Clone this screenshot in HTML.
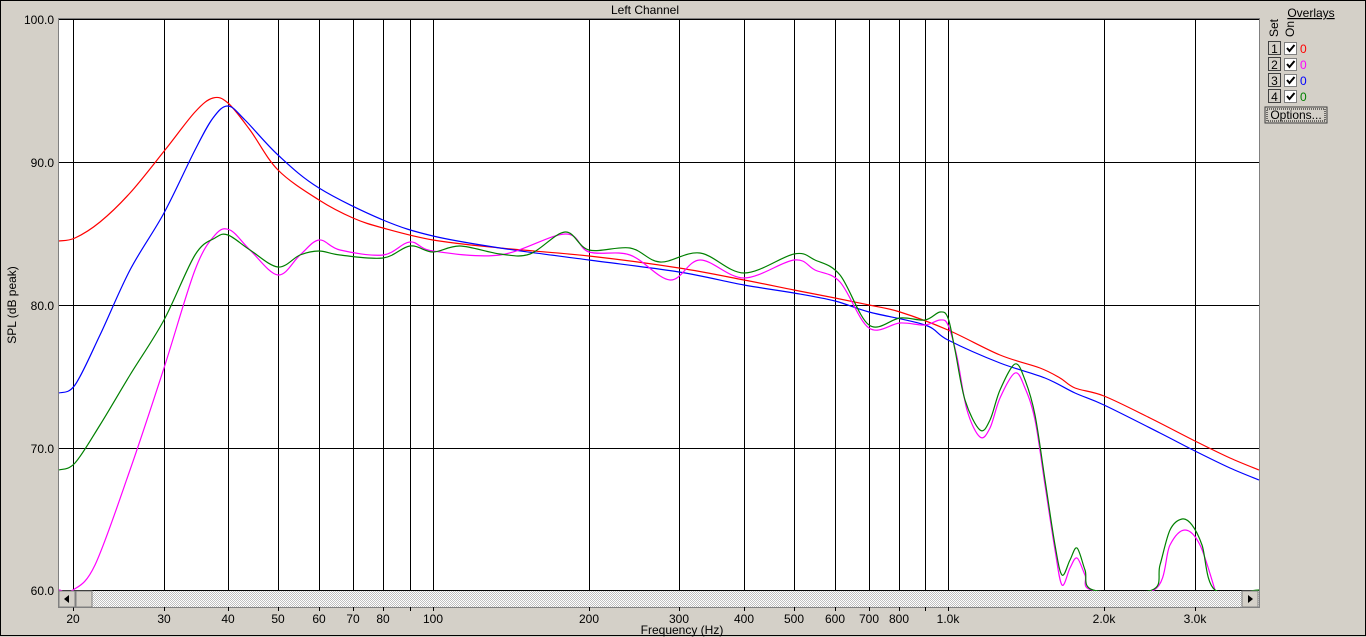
<!DOCTYPE html>
<html><head><meta charset="utf-8"><style>
body{margin:0;width:1366px;height:637px;background:#d4d0c8;font-family:"Liberation Sans",sans-serif;overflow:hidden;position:relative}
.t{position:absolute;font-size:12px;color:#000}
</style></head><body>
<svg width="1366" height="637" style="position:absolute;left:0;top:0" font-family="Liberation Sans, sans-serif" font-size="12">
<rect x="0.5" y="0.5" width="1365" height="635" fill="none" stroke="#000"/>
<rect x="58" y="18" width="1202" height="590" fill="#808080"/>
<rect x="59" y="19" width="1200" height="572" fill="#fff"/>
<g stroke="#000" stroke-width="1" id="grid"></g>
<g fill="none" stroke-width="1.2" id="curves"></g>
<defs><pattern id="ck" width="2" height="2" patternUnits="userSpaceOnUse"><rect width="2" height="2" fill="#fff"/><rect width="1" height="1" fill="#c0c0c0"/><rect x="1" y="1" width="1" height="1" fill="#c0c0c0"/></pattern></defs>
<rect x="59" y="591" width="1200" height="16" fill="url(#ck)"/>
<rect x="59" y="591" width="16" height="16" fill="#d4d0c8" stroke="#808080"/>
<polygon points="64,599 69,595 69,603" fill="#000"/>
<rect x="76" y="591" width="16" height="16" fill="#d4d0c8" stroke="#808080"/>
<rect x="1242" y="591" width="16" height="16" fill="#d4d0c8" stroke="#808080"/>
<polygon points="1253,599 1248,595 1248,603" fill="#000"/>
<text x="645" y="14" text-anchor="middle">Left Channel</text>
<text x="682" y="634" text-anchor="middle">Frequency (Hz)</text>
<text transform="translate(16,305) rotate(-90)" text-anchor="middle">SPL (dB peak)</text>
<g text-anchor="end"><text x="54" y="24">100.0</text><text x="54" y="167">90.0</text><text x="54" y="310">80.0</text><text x="54" y="453">70.0</text><text x="54" y="595">60.0</text></g>
<g text-anchor="middle" id="xl"></g>
<text x="1311" y="17" text-anchor="middle" text-decoration="underline">Overlays</text>
<text transform="translate(1278,37) rotate(-90)">Set</text>
<text transform="translate(1294,37) rotate(-90)">On</text>
<g id="ov"></g>
<rect x="1265" y="107" width="62" height="16" fill="#d4d0c8" stroke="#404040"/>
<rect x="1267" y="109" width="58" height="12" fill="none" stroke="#000" stroke-dasharray="1,1"/>
<text x="1296" y="119" text-anchor="middle">Options...</text>
</svg>
<script>
var ns="http://www.w3.org/2000/svg";
function el(p,t,a,txt){var e=document.createElementNS(ns,t);for(var k in a)e.setAttribute(k,a[k]);if(txt)e.textContent=txt;document.getElementById(p).appendChild(e);return e;}
[19,162,305,448,590].forEach(function(y){el("grid","line",{x1:59,x2:1259,y1:y+.5,y2:y+.5});});
var xs=[[73,"20"],[164,"30"],[228,"40"],[278,"50"],[319,"60"],[353,"70"],[383,"80"],[410,""],[433,"100"],[589,"200"],[679,"300"],[744,"400"],[794,"500"],[835,"600"],[869,"700"],[899,"800"],[925,""],[948,"1.0k"],[1104,"2.0k"],[1195,"3.0k"]];
xs.forEach(function(p){el("grid","line",{x1:p[0]+.5,x2:p[0]+.5,y1:19,y2:591});el("grid","line",{x1:p[0]+.5,x2:p[0]+.5,y1:607,y2:611});if(p[1])el("xl","text",{x:p[0],y:623},p[1]);});
function path(pts){var d="M"+pts[0][0]+","+pts[0][1];for(var i=0;i<pts.length-1;i++){var p0=pts[i-1]||pts[i],p1=pts[i],p2=pts[i+1],p3=pts[i+2]||p2;d+=" C"+(p1[0]+(p2[0]-p0[0])/6)+","+(p1[1]+(p2[1]-p0[1])/6)+" "+(p2[0]-(p3[0]-p1[0])/6)+","+(p2[1]-(p3[1]-p1[1])/6)+" "+p2[0]+","+p2[1];}return d;}
var C={
red:[[59,241],[75,238],[100,222],[130,193],[165,150],[195,112],[213,98],[228,103],[250,130],[278,170],[319,200],[353,218],[383,228],[433,240],[500,248],[589,256],[679,268],[744,280],[794,290],[835,298],[869,305],[900,312],[948,330],[1000,355],[1040,368],[1060,378],[1075,388],[1104,396],[1150,418],[1195,441],[1230,458],[1259,470]],
blue:[[59,393],[75,385],[100,335],[130,270],[164,213],[195,150],[213,118],[228,106],[245,120],[278,155],[319,188],[383,220],[433,236],[500,248],[589,260],[679,272],[744,285],[794,293],[835,301],[869,312],[925,325],[948,340],[1000,363],[1045,378],[1075,393],[1104,405],[1160,433],[1195,451],[1230,468],[1259,480]],
green:[[59,470],[75,463],[100,425],[130,375],[164,320],[195,255],[215,238],[228,235],[250,250],[278,267],[300,255],[319,251],[340,255],[383,258],[410,246],[433,252],[460,246],[500,254],[530,254],[565,232],[589,250],[630,248],[660,262],[700,253],[744,273],[794,254],[815,260],[840,275],[869,325],[900,318],[925,320],[940,312],[948,318],[955,350],[965,400],[980,430],[990,420],[1000,390],[1015,364],[1025,380],[1035,415],[1045,480],[1055,545],[1062,575],[1070,560],[1077,548],[1085,570],[1093,590],[1152,590],[1160,565],[1170,530],[1182,519],[1192,525],[1202,545],[1215,590],[1259,590]],
magenta:[[59,590],[73,590],[95,565],[130,470],[164,368],[195,270],[215,235],[230,230],[250,250],[278,275],[300,255],[319,240],[340,250],[383,255],[410,242],[433,251],[500,255],[565,234],[589,252],[630,255],[670,280],[700,260],[744,278],[794,260],[815,270],[840,282],[869,328],[900,323],[925,325],[940,320],[948,325],[957,357],[967,410],[980,437],[990,428],[1000,398],[1015,373],[1025,388],[1035,420],[1045,485],[1055,550],[1062,585],[1070,568],[1077,558],[1085,575],[1092,590],[1154,590],[1170,545],[1185,530],[1200,545],[1215,590]]};
["red","blue","magenta","green"].forEach(function(c){el("curves","path",{d:path(C[c]),stroke:c=="green"?"#008000":c=="magenta"?"#f0f":c=="blue"?"#00f":"#f00"});});
var cols=["#f00","#f0f","#00f","#008000"];
for(var i=0;i<4;i++){var y=41+i*16;el("ov","rect",{x:1268.5,y:y+.5,width:12,height:13,fill:"#d4d0c8",stroke:"#404040"});el("ov","text",{x:1274.5,y:y+12,"text-anchor":"middle"},""+(i+1));el("ov","rect",{x:1284.5,y:y+1.5,width:12,height:12,fill:"#fff",stroke:"#808080"});el("ov","path",{d:"M1287,"+(y+7)+" l2.5,3 l5,-6",stroke:"#000","stroke-width":2,fill:"none"});el("ov","text",{x:1300,y:y+12,fill:cols[i]},"0");}
</script>
</body></html>
